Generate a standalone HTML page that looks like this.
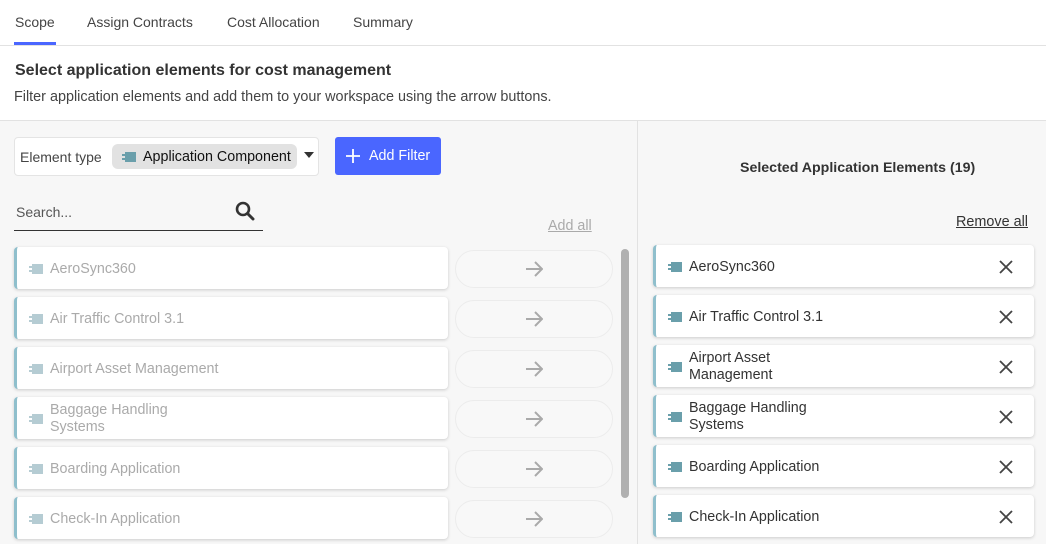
<!DOCTYPE html>
<html><head><meta charset="utf-8"><style>
*{box-sizing:border-box;margin:0;padding:0}
body{width:1046px;height:544px;overflow:hidden;background:#f7f7f7;font-family:"Liberation Sans",sans-serif;color:#333;position:relative}
.abs{position:absolute}
.tabs{left:0;top:0;width:1046px;height:46px;background:#fff;border-bottom:1px solid #e2e2e2}
.tab{top:14px;font-size:14px;color:#444}
.hdr{left:0;top:46px;width:1046px;height:75px;background:#fff;border-bottom:1px solid #e2e2e2}
.card{background:#fff;border-radius:4px;border-left:3px solid #8fbfcc;box-shadow:0 1px 3px rgba(0,0,0,.18);height:42px;display:flex;align-items:center;padding-left:12px;padding-top:2px;font-size:14.3px;line-height:17px}
.l{left:14px;width:434px;color:#aaa}
.r{left:653px;width:381px;color:#333}
.ic{width:14px;height:10px;margin-right:7px;position:relative;flex:none}
.ic:before{content:"";position:absolute;left:3px;top:0;width:11px;height:10px;background:currentColor}
.ic:after{content:"";position:absolute;left:0;top:2px;width:4px;height:6px;border-top:2px solid currentColor;border-bottom:2px solid currentColor;box-sizing:border-box}
.l .ic{color:#b5ccd3}.r .ic{color:#6a9fab}
.arr{left:455px;width:158px;height:38px;border:1px solid #ececec;border-radius:19px;background:#f8f8f8;display:flex;align-items:center;justify-content:center}
.x{position:absolute;right:20px;top:14px}
</style></head><body>
<div class="abs tabs"></div>
<div class="abs tab" style="left:15px">Scope</div>
<div class="abs" style="left:14px;top:42px;width:42px;height:3px;background:#4a66ff"></div>
<div class="abs tab" style="left:87px">Assign Contracts</div>
<div class="abs tab" style="left:227px">Cost Allocation</div>
<div class="abs tab" style="left:353px">Summary</div>
<div class="abs hdr"></div>
<div class="abs" style="left:15px;top:62px;font-size:16px;font-weight:bold;color:#333">Select application elements for cost management</div>
<div class="abs" style="left:14px;top:89px;font-size:14.4px;color:#444">Filter application elements and add them to your workspace using the arrow buttons.</div>
<div class="abs" style="left:637px;top:121px;width:1px;height:423px;background:#e2e2e2"></div>

<div class="abs" style="left:14px;top:137px;width:305px;height:39px;background:#fff;border:1px solid #e4e4e4;border-radius:4px"></div>
<div class="abs" style="left:20px;top:149px;font-size:14px;color:#444">Element type</div>
<div class="abs" style="left:112px;top:144px;width:185px;height:25px;background:#e2e2e2;border-radius:6px;display:flex;align-items:center;padding-left:10px;font-size:14.3px;color:#111"><span class="ic" style="color:#6a9fab"></span>Application Component</div>
<div class="abs" style="left:304px;top:152px;width:0;height:0;border-left:5px solid transparent;border-right:5px solid transparent;border-top:6px solid #333"></div>
<div class="abs" style="left:335px;top:137px;width:106px;height:38px;background:#4a66ff;border-radius:3px;color:#fff;font-size:14.3px;display:flex;align-items:center;padding-left:10px"><svg width="16" height="16" viewBox="0 0 16 16" style="margin-right:8px"><path d="M8 1v14M1 8h14" stroke="#fff" stroke-width="1.8"/></svg>Add Filter</div>

<div class="abs" style="left:16px;top:204px;font-size:14px;color:#555">Search...</div>
<svg class="abs" style="left:235px;top:201px" width="20" height="20" viewBox="0 0 20 20"><circle cx="8" cy="8" r="6" fill="none" stroke="#333" stroke-width="2.6"/><path d="M12.5 12.5l5.5 5.5" stroke="#333" stroke-width="3" stroke-linecap="round"/></svg>
<div class="abs" style="left:14px;top:230px;width:249px;height:1px;background:#333"></div>
<div class="abs" style="left:548px;top:218px;font-size:14.3px;color:#aaa;text-decoration:underline">Add all</div>
<div class="abs" style="left:740px;top:160px;font-size:14.2px;font-weight:bold;color:#333">Selected Application Elements (19)</div>
<div class="abs" style="left:956px;top:214px;font-size:14.4px;color:#333;text-decoration:underline">Remove all</div>
<div class="abs" style="left:621px;top:249px;width:8px;height:249px;background:#b0b0b0;border-radius:4px"></div>

<div class="abs card l" style="top:247px"><span class="ic"></span>AeroSync360</div>
<div class="abs card l" style="top:297px"><span class="ic"></span>Air Traffic Control 3.1</div>
<div class="abs card l" style="top:347px"><span class="ic"></span>Airport Asset Management</div>
<div class="abs card l" style="top:397px"><span class="ic"></span>Baggage Handling<br>Systems</div>
<div class="abs card l" style="top:447px"><span class="ic"></span>Boarding Application</div>
<div class="abs card l" style="top:497px"><span class="ic"></span>Check-In Application</div>

<svg width="0" height="0" style="position:absolute"><defs><g id="a"><path d="M1 9h16M10 2l7 7-7 7" fill="none" stroke="#aaa" stroke-width="2"/></g><g id="c"><path d="M2 2l12 12M14 2L2 14" stroke="#444" stroke-width="1.8"/></g></defs></svg>
<div class="abs arr" style="top:250px"><svg width="18" height="18"><use href="#a"/></svg></div>
<div class="abs arr" style="top:300px"><svg width="18" height="18"><use href="#a"/></svg></div>
<div class="abs arr" style="top:350px"><svg width="18" height="18"><use href="#a"/></svg></div>
<div class="abs arr" style="top:400px"><svg width="18" height="18"><use href="#a"/></svg></div>
<div class="abs arr" style="top:450px"><svg width="18" height="18"><use href="#a"/></svg></div>
<div class="abs arr" style="top:500px"><svg width="18" height="18"><use href="#a"/></svg></div>

<div class="abs card r" style="top:245px"><span class="ic"></span>AeroSync360<svg class="x" width="16" height="16"><use href="#c"/></svg></div>
<div class="abs card r" style="top:295px"><span class="ic"></span>Air Traffic Control 3.1<svg class="x" width="16" height="16"><use href="#c"/></svg></div>
<div class="abs card r" style="top:345px"><span class="ic"></span>Airport Asset<br>Management<svg class="x" width="16" height="16"><use href="#c"/></svg></div>
<div class="abs card r" style="top:395px"><span class="ic"></span>Baggage Handling<br>Systems<svg class="x" width="16" height="16"><use href="#c"/></svg></div>
<div class="abs card r" style="top:445px"><span class="ic"></span>Boarding Application<svg class="x" width="16" height="16"><use href="#c"/></svg></div>
<div class="abs card r" style="top:495px"><span class="ic"></span>Check-In Application<svg class="x" width="16" height="16"><use href="#c"/></svg></div>
</body></html>
